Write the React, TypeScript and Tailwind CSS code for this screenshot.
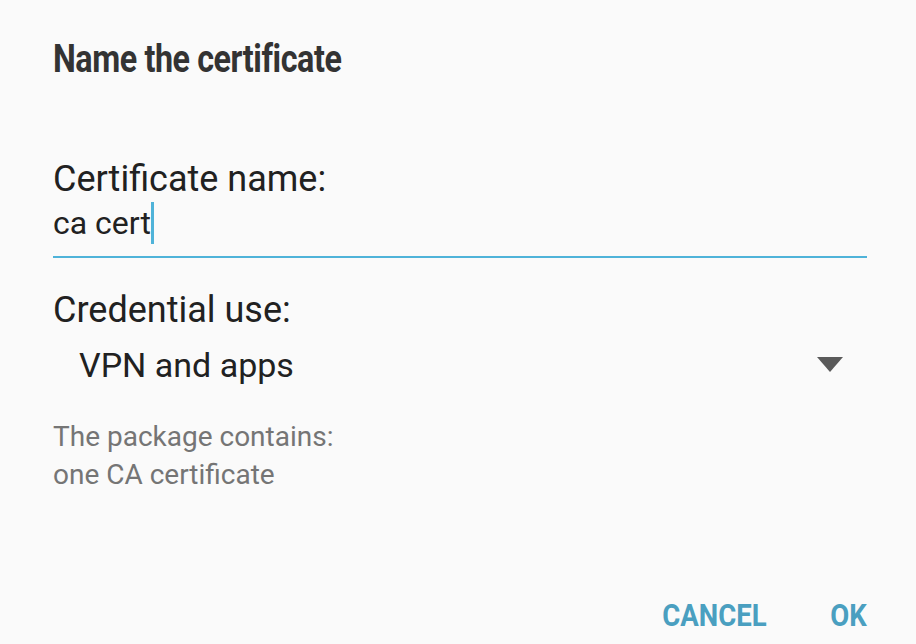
export default function App() {
  return (
    <div
      className="w-[916px] h-[644px] bg-[#fafafa] overflow-hidden relative"
      style={{ fontFamily: 'Roboto, "Liberation Sans", sans-serif' }}
    >
      <div className="px-[53px] pt-[36px]">
        {/* Title */}
        <h1 className="text-[38px] leading-[46px] font-bold text-[#333333] tracking-[-0.5px] origin-left scale-x-[0.85]">
          Name the certificate
        </h1>

        {/* Certificate name */}
        <div className="mt-[76px]">
          <p className="text-[36px] leading-[42px] text-[#212121]">Certificate name:</p>
          <div className="flex items-center h-[46px] border-b-2 border-[#4fb3d9] pb-[10px] box-content w-[814px]">
            <span className="text-[32px] leading-[46px] text-[#212121]">ca cert</span>
            <span className="w-[3px] h-[42px] bg-[#4fb3d9]" />
          </div>
        </div>

        {/* Credential use */}
        <div className="mt-[31px]">
          <p className="text-[36px] leading-[42px] text-[#212121]">Credential use:</p>
          <div className="flex items-center justify-between w-[814px] h-[68px] pl-[26px] pr-[24px]">
            <span className="text-[34px] text-[#212121]">VPN and apps</span>
            <svg width="26" height="16" viewBox="0 0 26 16">
              <path d="M0 0 H26 L13 15 Z" fill="#5a5a5a" />
            </svg>
          </div>
        </div>

        {/* Package info */}
        <div className="mt-[19px] text-[28px] leading-[38px] text-[#757575]">
          <p>The package contains:</p>
          <p>one CA certificate</p>
        </div>
      </div>

      {/* Actions */}
      <div className="absolute bottom-[5px] right-[49px] flex gap-[74px] text-[32px] font-bold text-[#4a9fc0] origin-right scale-x-[0.86]">
        <button>CANCEL</button>
        <button>OK</button>
      </div>
    </div>
  )
}
